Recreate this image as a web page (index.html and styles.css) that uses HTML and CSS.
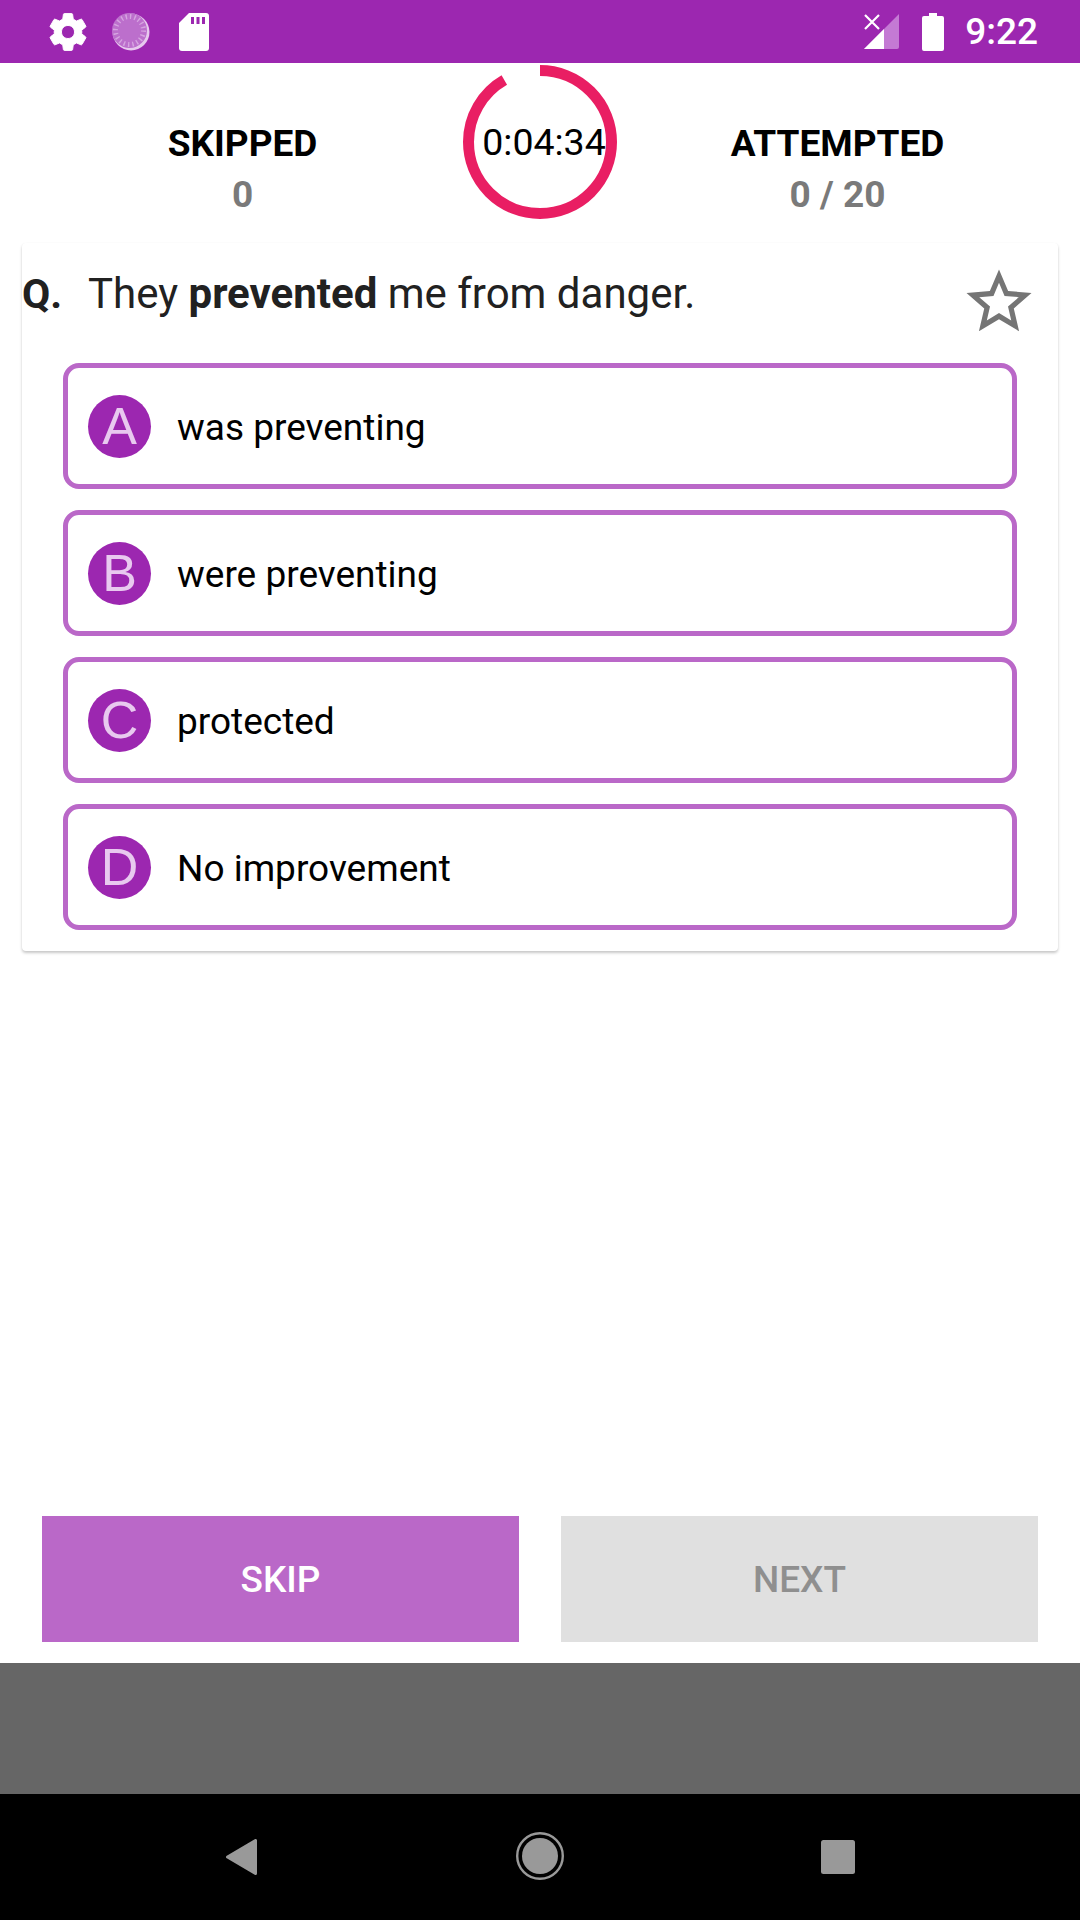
FILE: index.html
```html
<!DOCTYPE html>
<html lang="en">
<head>
<meta charset="utf-8">
<title>Quiz</title>
<link rel="stylesheet" href="styles.css">
</head>
<body>
<div class="page">
  <header class="status">
    <div class="status-left">
      <span class="status-cell">
        <svg class="ic-gear" viewBox="0 0 24 24"><path fill="#fff" stroke="#fff" stroke-width=".5" d="M19.14 12.94c.04-.3.06-.61.06-.94 0-.32-.02-.64-.07-.94l2.03-1.58c.18-.14.23-.41.12-.61l-1.92-3.32c-.12-.22-.37-.29-.59-.22l-2.39.96c-.5-.38-1.03-.7-1.62-.94l-.36-2.54c-.04-.24-.24-.41-.48-.41h-3.84c-.24 0-.43.17-.47.41l-.36 2.54c-.59.24-1.13.57-1.62.94l-2.39-.96c-.22-.08-.47 0-.59.22L2.74 8.87c-.12.21-.08.47.12.61l2.03 1.58c-.05.3-.09.63-.09.94s.02.64.07.94l-2.03 1.58c-.18.14-.23.41-.12.61l1.92 3.32c.12.22.37.29.59.22l2.39-.96c.5.38 1.03.7 1.62.94l.36 2.54c.05.24.24.41.48.41h3.84c.24 0 .44-.17.47-.41l.36-2.54c.59-.24 1.13-.56 1.62-.94l2.39.96c.22.08.47 0 .59-.22l1.92-3.32c.12-.22.07-.47-.12-.61l-2.01-1.58zM12 15.4c-1.88 0-3.4-1.52-3.4-3.4s1.52-3.4 3.4-3.4 3.4 1.52 3.4 3.4-1.52 3.4-3.4 3.4z"/></svg>
      </span>
      <span class="status-cell">
        <svg class="ic-sync" viewBox="0 0 38 38">
          <circle cx="19" cy="19" r="18.5" fill="#e7c9ee"/>
          <circle cx="17.5" cy="17.5" r="17.5" fill="#bc6fcc"/>
          <circle cx="17.5" cy="17.5" r="14" fill="none" stroke="#d6a4e1" stroke-width="5" stroke-dasharray="1.4 3"/>
        </svg>
      </span>
      <span class="status-cell">
        <svg class="ic-sd" viewBox="0 0 30 38"><path fill="#fff" d="M10 0H27a3 3 0 0 1 3 3V35a3 3 0 0 1-3 3H3a3 3 0 0 1-3-3V10z"/><path fill="#9c27b0" d="M12 4h3v7h-3zM17.5 4h3v7h-3zM23 4h3v7h-3z"/></svg>
      </span>
    </div>
    <div class="status-right">
      <svg class="ic-signal" viewBox="0 0 35 35"><path fill="#c47ad4" d="M35 0V33a2 2 0 0 1-2 2H0z"/><path fill="#fff" d="M20 15V35H0z"/><path fill="none" stroke="#fff" stroke-width="2.2" d="M1 1L15 15M15 1L1 15"/></svg>
      <svg class="ic-battery" viewBox="0 0 22 38"><path fill="#fff" d="M7 0h8v3h5a2 2 0 0 1 2 2V36a2 2 0 0 1-2 2H2a2 2 0 0 1-2-2V5a2 2 0 0 1 2-2h5z"/></svg>
      <span class="clock">9:22</span>
    </div>
  </header>

  <section class="stats">
    <div class="stat">
      <div class="stat-label">SKIPPED</div>
      <div class="stat-value">0</div>
    </div>
    <div class="timer">
      <svg class="timer-ring" viewBox="0 0 154 154">
        <circle class="timer-arc" cx="77" cy="77" r="71.5" pathLength="360" stroke-dasharray="330 30" transform="rotate(-90 77 77)"/>
      </svg>
      <span class="timer-text">0:04:34</span>
    </div>
    <div class="stat">
      <div class="stat-label">ATTEMPTED</div>
      <div class="stat-value">0 / 20</div>
    </div>
  </section>

  <section class="card">
    <div class="question">
      <span class="q-mark">Q.</span>
      <p class="q-text">They <b>prevented</b> me from danger.</p>
      <svg class="star" viewBox="0 0 24 24"><path fill="#757575" d="M22 9.24l-7.19-.62L12 2 9.19 8.63 2 9.24l5.46 4.73L5.82 21 12 17.27 18.18 21l-1.63-7.03L22 9.24zM12 15.4l-3.76 2.27 1-4.28-3.32-2.88 4.38-.38L12 6.1l1.71 4.04 4.38.38-3.32 2.88 1 4.28L12 15.4z"/></svg>
    </div>
    <div class="options">
      <div class="option"><span class="badge">A</span><span class="opt-text">was preventing</span></div>
      <div class="option"><span class="badge">B</span><span class="opt-text">were preventing</span></div>
      <div class="option"><span class="badge">C</span><span class="opt-text">protected</span></div>
      <div class="option"><span class="badge">D</span><span class="opt-text">No improvement</span></div>
    </div>
  </section>

  <div class="spacer"></div>

  <div class="actions">
    <button class="btn btn-skip">SKIP</button>
    <button class="btn btn-next">NEXT</button>
  </div>

  <div class="strip"></div>

  <nav class="navbar">
    <svg class="nav-back" viewBox="0 0 31 36"><path fill="#999" stroke="#999" stroke-width="3" stroke-linejoin="round" d="M29.5 1.5V34.5L1.5 18z"/></svg>
    <svg class="nav-home" viewBox="0 0 48 48"><circle cx="24" cy="24" r="22.8" fill="none" stroke="#999" stroke-width="2.4"/><circle cx="24" cy="24" r="18" fill="#999"/></svg>
    <svg class="nav-recent" viewBox="0 0 34 34"><rect width="34" height="34" rx="2.5" fill="#999"/></svg>
  </nav>
</div>
</body>
</html>
```
FILE: styles.css
```css
* { box-sizing: border-box; }
html, body { margin: 0; padding: 0; background: #fff; }
body { font-family: Roboto, "Liberation Sans", sans-serif; }
.page { width: 1080px; height: 1920px; display: flex; flex-direction: column; overflow: hidden; }

.status { height: 63px; background: #9c27b0; display: flex; justify-content: space-between; align-items: center; flex: none; }
.status-left { display: flex; align-items: center; padding-left: 36px; }
.status-cell { width: 63px; height: 63px; display: flex; align-items: center; justify-content: center; }
.ic-gear { width: 46px; height: 46px; }
.ic-sync { width: 38px; height: 38px; }
.ic-sd { width: 30px; height: 38px; }
.status-right { display: flex; align-items: center; padding-right: 42px; }
.ic-signal { width: 35px; height: 35px; margin-right: 23px; }
.ic-battery { width: 22px; height: 38px; margin-right: 21px; }
.clock { color: #fff; font-size: 37px; font-weight: 500; line-height: 63px; }

.stats { flex: none; height: 178px; display: grid; grid-template-columns: 1fr 154px 1fr; padding: 0 22px; }
.stat { text-align: center; padding-top: 60px; }
.stat-label { font-size: 37px; line-height: 42px; font-weight: 700; color: #000; }
.stat-value { font-size: 37px; line-height: 42px; font-weight: 700; color: #7a7a7a; margin-top: 9px; }
.timer { position: relative; width: 154px; height: 154px; margin-top: 2px; display: flex; align-items: center; justify-content: center; }
.timer-ring { position: absolute; inset: 0; width: 154px; height: 154px; }
.timer-arc { fill: none; stroke: #e91e63; stroke-width: 11; }
.timer-text { position: relative; left: 4px; font-size: 37.5px; color: #000; white-space: nowrap; }

.card { flex: none; margin: 2px 22px 0; background: #fff; border-radius: 4px; box-shadow: 0 2px 3px rgba(0,0,0,.22), 0 0 1px rgba(0,0,0,.04); height: 708px; }
.question { height: 120px; display: flex; align-items: flex-start; padding-right: 20px; }
.q-mark { width: 66px; font-size: 41px; line-height: 48px; font-weight: 700; color: #212121; margin-top: 27px; }
.q-text { margin: 27px 0 0; flex: 1; font-size: 42px; line-height: 48px; color: #212121; }
.q-text b { font-weight: 700; }
.star { width: 78px; height: 78px; margin-top: 20px; flex: none; }
.options { display: flex; flex-direction: column; gap: 21px; margin: 0 41px; }
.option { height: 126px; border: 5px solid #ba68c8; border-radius: 16px; display: flex; align-items: center; padding-left: 20px; }
.badge { width: 63px; height: 63px; border-radius: 50%; background: #9c27b0; color: #e8c9ef; font-family: "Liberation Sans", sans-serif; font-size: 52px; line-height: 62px; display: flex; align-items: center; justify-content: center; flex: none; }
.opt-text { margin-left: 26px; font-size: 37px; color: #000; position: relative; top: 1px; }

.spacer { flex: 1; }
.actions { flex: none; display: flex; gap: 42px; padding: 0 42px; margin-bottom: 21px; }
.btn { flex: 1; height: 126px; border: 0; font-family: inherit; font-size: 37px; font-weight: 500; padding-top: 2px; }
.btn-skip { background: #ba68c8; color: #fff; }
.btn-next { background: #e0e0e0; color: #8f8f8f; }
.strip { flex: none; height: 131px; background: #666; }
.navbar { flex: none; height: 126px; background: #000; position: relative; }
.nav-back { position: absolute; left: 226px; top: 45px; width: 31px; height: 36px; }
.nav-home { position: absolute; left: 516px; top: 38px; width: 48px; height: 48px; }
.nav-recent { position: absolute; left: 821px; top: 46px; width: 34px; height: 34px; }
```
